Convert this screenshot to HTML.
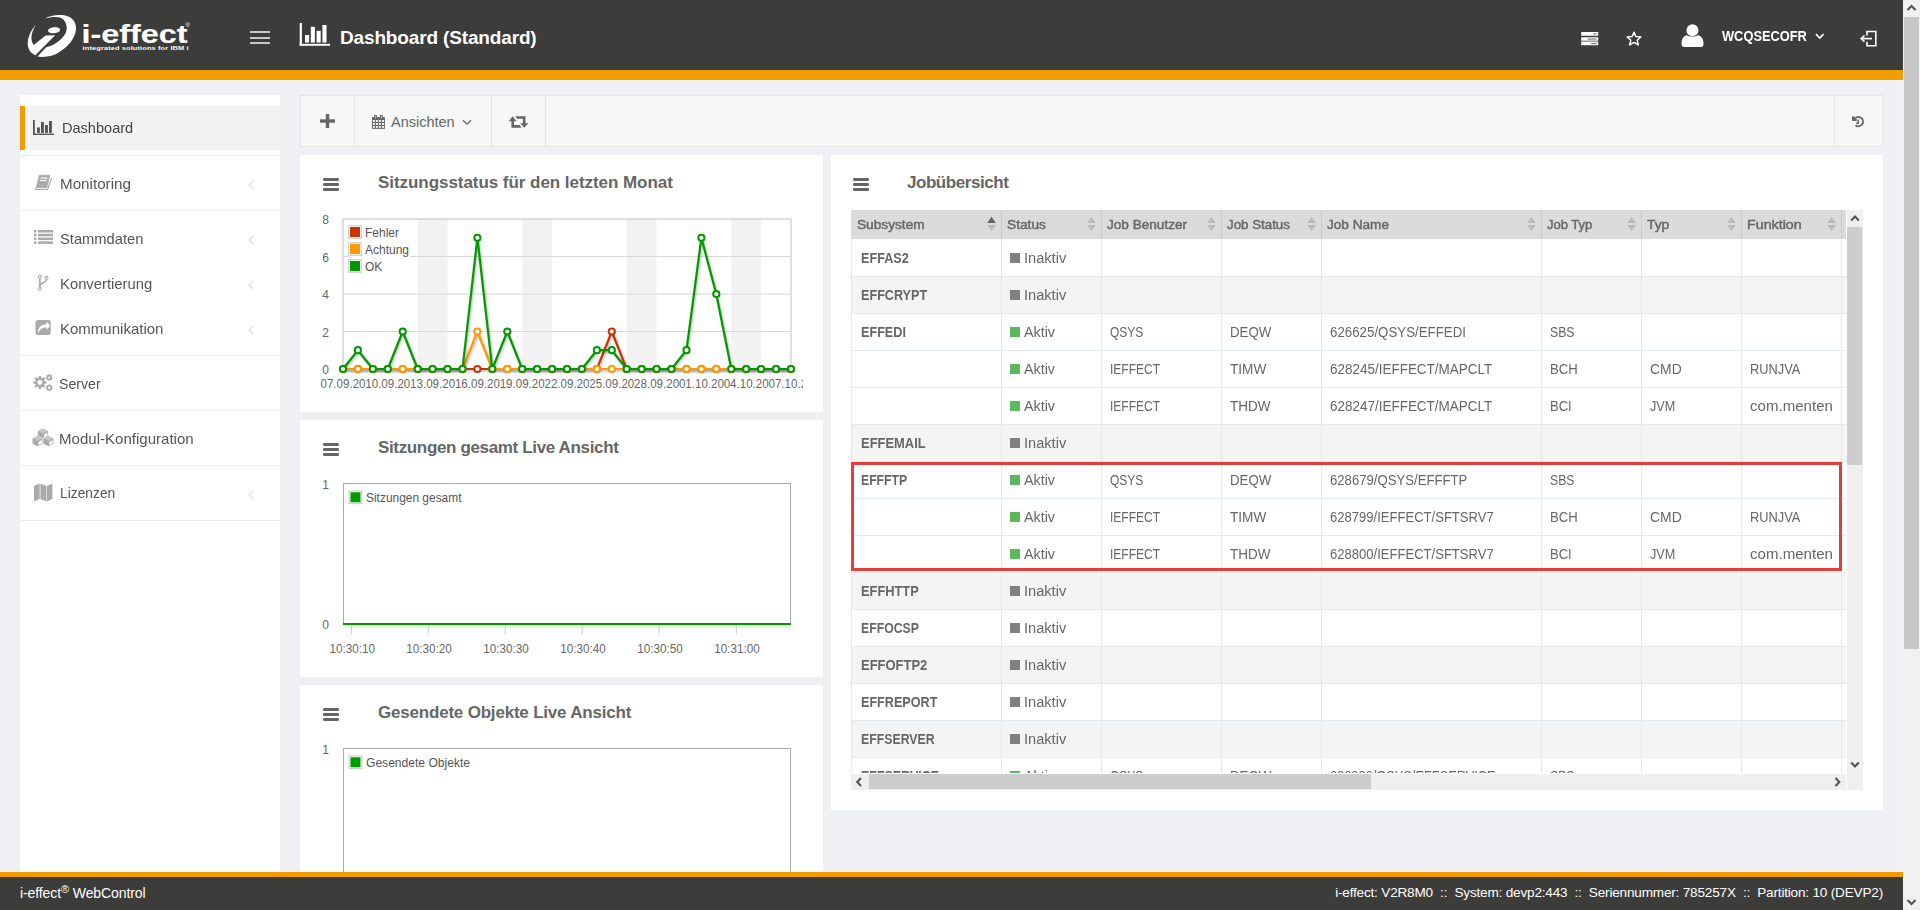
<!DOCTYPE html><html><head><meta charset="utf-8"><title>i-effect WebControl</title><style>
html,body{margin:0;padding:0;overflow:hidden;}
body{width:1920px;height:910px;overflow:hidden;position:relative;background:#eef0f4;font-family:"Liberation Sans", sans-serif;}
.a{position:absolute;}
.t{position:absolute;white-space:nowrap;line-height:1;}
svg{position:absolute;overflow:visible;}

</style></head><body>
<div class="a" style="left:0;top:0;width:1903px;height:70px;background:#3c3c3b"></div>
<div class="a" style="left:0;top:70px;width:1903px;height:10px;background:#f39c00"></div>
<svg style="left:24px;top:12px" width="56" height="48" viewBox="0 0 1062 910"><g fill="#fff">
<path d="M400,125 C480,70 650,45 780,65 C920,90 1000,200 985,340 C965,520 800,700 600,800 C480,850 350,860 255,845 L420,670 C560,640 720,540 790,400 C840,290 800,150 680,105 C600,80 480,95 400,125 Z"/>
<path d="M225,245 C130,330 50,520 75,650 C95,740 150,790 215,820 L590,440 L410,445 L185,625 C130,560 110,420 225,245 Z"/>
<ellipse cx="570" cy="345" rx="115" ry="58" transform="rotate(-5 570 345)"/>
</g></svg>
<svg style="left:0;top:0" width="200" height="70" viewBox="0 0 200 70">
<text transform="translate(81.4,42.9) scale(1.245,1)" fill="#fff" stroke="#fff" stroke-width="0.15" style="font-family:'Liberation Sans';font-weight:700;font-size:26px;letter-spacing:0px">i-effect</text>
<text transform="translate(82.6,49.9) scale(1.235,1)" fill="#fff" style="font-family:'Liberation Sans';font-weight:700;font-size:6px;letter-spacing:0.1px">integrated solutions for IBM i</text>
<text x="185.5" y="26.8" fill="#fff" style="font-family:'Liberation Sans';font-size:6px">®</text>
</svg>
<div class="a" style="left:250px;top:31px;width:20px;height:2px;background:#c8c8c8"></div>
<div class="a" style="left:250px;top:36.5px;width:20px;height:2px;background:#c8c8c8"></div>
<div class="a" style="left:250px;top:42px;width:20px;height:2px;background:#c8c8c8"></div>
<svg style="left:299px;top:23px" width="32" height="23" viewBox="0 0 32 23"><g fill="#fff">
<rect x="0.7" y="0" width="2.2" height="22.8"/><rect x="0.7" y="20.8" width="30.3" height="2"/>
<rect x="6" y="12" width="4.1" height="7.5"/><rect x="11.8" y="3.8" width="4.1" height="15.7"/><rect x="17.6" y="7.8" width="4.1" height="11.7"/><rect x="23.4" y="2" width="4.1" height="17.5"/>
</g></svg>
<div class="t" style="left:340px;top:27.5px;font-size:19px;font-weight:700;color:#fff;letter-spacing:-0.15px">Dashboard (Standard)</div>
<svg style="left:1581px;top:31px" width="18" height="15" viewBox="0 0 18 15"><g fill="#fff">
<rect x="0.2" y="1" width="17" height="3.7" rx="0.5"/><rect x="0.2" y="6.2" width="17" height="3.6" rx="0.5"/><rect x="0.2" y="9.8" width="17" height="1.1" fill="#aaa"/><rect x="0.2" y="10.9" width="17" height="3.3" rx="0.5"/>
</g><g fill="#555"><rect x="12.4" y="2.4" width="3.3" height="0.9"/><rect x="6.6" y="7.6" width="9.1" height="0.9"/><rect x="10.2" y="12.2" width="5.5" height="0.9"/></g></svg>
<svg style="left:1626px;top:31px" width="16" height="15" viewBox="0 0 16 15"><path d="M8 1.2 L10 5.6 L14.8 6 L11.2 9.2 L12.3 13.9 L8 11.4 L3.7 13.9 L4.8 9.2 L1.2 6 L6 5.6 Z" fill="none" stroke="#fff" stroke-width="1.5" stroke-linejoin="round"/></svg>
<svg style="left:1680.7px;top:24px" width="24" height="23" viewBox="0 0 24 23"><g fill="#fff">
<circle cx="11.5" cy="6.2" r="6"/><path d="M0.5 20 C0.5 14 3 12 6 11.2 C8 13 15 13 17 11.2 C20 12 22.5 14 22.5 20 C22.5 22.5 21 23 19 23 L4 23 C2 23 0.5 22.5 0.5 20 Z"/>
</g></svg>
<div class="t" style="left:1722.00px;top:28.95px;font-size:14px;font-weight:700;color:#fff;letter-spacing:0.0px;transform:scaleX(0.9173);transform-origin:0 0">WCQSECOFR</div>
<svg style="left:1814.5px;top:33px" width="11" height="7" viewBox="0 0 11 7"><path d="M1 1.2 L4.75 5 L8.5 1.2" fill="none" stroke="#fff" stroke-width="1.7"/></svg>
<svg style="left:1859px;top:30px" width="19" height="17" viewBox="0 0 19 17"><g fill="none" stroke="#fff" stroke-width="1.6">
<path d="M8 5.5 V1.5 H16.8 V15.8 H8 V11.7"/><path d="M13 8.6 H3"/><path d="M5.5 5.5 L2.2 8.6 L5.5 11.7"/>
</g></svg>
<div class="a" style="left:1903px;top:0;width:17px;height:910px;background:#f1f1f1"></div>
<div class="a" style="left:1904px;top:17px;width:15px;height:632px;background:#c6c6c6"></div>
<svg style="left:1903px;top:0" width="17" height="17" viewBox="0 0 17 17"><path d="M4.5 10 L8.5 6 L12.5 10" fill="none" stroke="#505050" stroke-width="2"/></svg>
<svg style="left:1903px;top:893px" width="17" height="17" viewBox="0 0 17 17"><path d="M4.5 7 L8.5 11 L12.5 7" fill="none" stroke="#505050" stroke-width="2"/></svg>
<div class="a" style="left:20px;top:95px;width:260px;height:777px;background:#fff"></div>
<div class="a" style="left:20px;top:106px;width:260px;height:44px;background:#f2f2f2"></div>
<div class="a" style="left:20px;top:106px;width:5px;height:44px;background:#f39c00"></div>
<div class="a" style="left:20px;top:155px;width:260px;height:1px;background:#ececec"></div>
<div class="a" style="left:20px;top:210px;width:260px;height:1px;background:#ececec"></div>
<div class="a" style="left:20px;top:355px;width:260px;height:1px;background:#ececec"></div>
<div class="a" style="left:20px;top:410px;width:260px;height:1px;background:#ececec"></div>
<div class="a" style="left:20px;top:465px;width:260px;height:1px;background:#ececec"></div>
<div class="a" style="left:20px;top:520px;width:260px;height:1px;background:#ececec"></div>
<div class="t" style="left:61.90px;top:121.39px;font-size:14.6px;font-weight:400;color:#444;letter-spacing:0.0px;transform:scaleX(0.9969);transform-origin:0 0">Dashboard</div>
<div class="t" style="left:60.00px;top:176.64px;font-size:14.6px;font-weight:400;color:#555;letter-spacing:0.0px;transform:scaleX(1.0416);transform-origin:0 0">Monitoring</div>
<svg style="left:247px;top:180px" width="8" height="10" viewBox="0 0 8 10"><path d="M6.5 0.8 L2 5 L6.5 9.2" fill="none" stroke="#dedede" stroke-width="1.2"/></svg>
<div class="t" style="left:59.60px;top:231.74px;font-size:14.6px;font-weight:400;color:#555;letter-spacing:0.0px;transform:scaleX(1.0076);transform-origin:0 0">Stammdaten</div>
<svg style="left:247px;top:235px" width="8" height="10" viewBox="0 0 8 10"><path d="M6.5 0.8 L2 5 L6.5 9.2" fill="none" stroke="#dedede" stroke-width="1.2"/></svg>
<div class="t" style="left:59.60px;top:276.84px;font-size:14.6px;font-weight:400;color:#555;letter-spacing:0.0px;transform:scaleX(1.0154);transform-origin:0 0">Konvertierung</div>
<svg style="left:247px;top:280px" width="8" height="10" viewBox="0 0 8 10"><path d="M6.5 0.8 L2 5 L6.5 9.2" fill="none" stroke="#dedede" stroke-width="1.2"/></svg>
<div class="t" style="left:59.60px;top:321.64px;font-size:14.6px;font-weight:400;color:#555;letter-spacing:0.0px;transform:scaleX(1.0286);transform-origin:0 0">Kommunikation</div>
<svg style="left:247px;top:325px" width="8" height="10" viewBox="0 0 8 10"><path d="M6.5 0.8 L2 5 L6.5 9.2" fill="none" stroke="#dedede" stroke-width="1.2"/></svg>
<div class="t" style="left:59.40px;top:376.94px;font-size:14.6px;font-weight:400;color:#555;letter-spacing:0.0px;transform:scaleX(0.9698);transform-origin:0 0">Server</div>
<div class="t" style="left:59.40px;top:432.04px;font-size:14.6px;font-weight:400;color:#555;letter-spacing:0.0px;transform:scaleX(1.0308);transform-origin:0 0">Modul-Konfiguration</div>
<div class="t" style="left:60.00px;top:486.34px;font-size:14.6px;font-weight:400;color:#555;letter-spacing:0.0px;transform:scaleX(0.9462);transform-origin:0 0">Lizenzen</div>
<svg style="left:247px;top:490px" width="8" height="10" viewBox="0 0 8 10"><path d="M6.5 0.8 L2 5 L6.5 9.2" fill="none" stroke="#dedede" stroke-width="1.2"/></svg>
<svg style="left:33px;top:120px" width="22" height="16" viewBox="0 0 22 16"><g fill="#555">
<rect x="0" y="0" width="1.8" height="15"/><rect x="0" y="13.6" width="21" height="1.4"/>
<rect x="4" y="7.4" width="2.9" height="5.5"/><rect x="8" y="2.1" width="2.9" height="10.8"/><rect x="12" y="5" width="2.9" height="7.9"/><rect x="16" y="1" width="2.9" height="11.9"/>
</g></svg>
<svg style="left:34px;top:174px" width="20" height="17" viewBox="0 0 20 17">
<path d="M5.4 1.2 H15.8 L12.8 13.7 H2.1 Z" fill="#aaa" stroke="#aaa" stroke-width="0.8" stroke-linejoin="round"/>
<path d="M6.8 4.1 H13.2 M6.1 6.5 H12.6" stroke="#fff" stroke-width="1.1"/>
<path d="M1.6 14.2 C1 14.6 1 15.4 1.8 15.5 H13.6 L17.6 4" fill="none" stroke="#aaa" stroke-width="1.1"/>
</svg>
<svg style="left:34px;top:230px" width="19" height="14" viewBox="0 0 19 14"><g fill="#aaa">
<rect x="0" y="0" width="2.5" height="2.5"/><rect x="4" y="0" width="15" height="2.5"/>
<rect x="0" y="3.8" width="2.5" height="2.5"/><rect x="4" y="3.8" width="15" height="2.5"/>
<rect x="0" y="7.6" width="2.5" height="2.5"/><rect x="4" y="7.6" width="15" height="2.5"/>
<rect x="0" y="11.4" width="2.5" height="2.5"/><rect x="4" y="11.4" width="15" height="2.5"/>
</g></svg>
<svg style="left:37px;top:274px" width="12" height="17" viewBox="0 0 12 17"><g fill="none" stroke="#aaa">
<circle cx="2.85" cy="2.8" r="1.45" stroke-width="1.1"/><circle cx="9.5" cy="3.8" r="1.45" stroke-width="1.1"/><circle cx="2.85" cy="14.5" r="1.45" stroke-width="1.1"/>
<path d="M2.85 4.3 V13" stroke-width="1.6"/><path d="M9.5 5.3 C9.5 9.5 3.5 8.5 2.85 11.5" stroke-width="1.5"/></g></svg>
<svg style="left:35px;top:319px" width="17" height="17" viewBox="0 0 17 17"><rect x="0.5" y="1" width="15.3" height="15" rx="2.5" fill="#aaa"/>
<path d="M3 14.2 C2.8 9 5.5 5.2 11.5 5.2 V2.5 L15.2 6.7 L11.5 10.9 V8.4 C7.5 8.4 5 10 3 14.2 Z" fill="#fff"/></svg>
<svg style="left:33px;top:374px" width="21" height="18" viewBox="0 0 21 18"><g fill="#aaa">
<circle cx="6.9" cy="8.5" r="4.8"/><g stroke="#aaa" stroke-width="2.4"><path d="M6.9 2 V15 M0.4 8.5 H13.4 M2.3 3.9 L11.5 13.1 M2.3 13.1 L11.5 3.9"/></g>
<circle cx="16.2" cy="3.6" r="2.7"/><g stroke="#aaa" stroke-width="1.3"><path d="M16.2 0.1 V7.1 M12.7 3.6 H19.7 M13.7 1.1 L18.7 6.1 M13.7 6.1 L18.7 1.1"/></g>
<circle cx="16.2" cy="13.8" r="2.7"/><g stroke="#aaa" stroke-width="1.3"><path d="M16.2 10.3 V17.3 M12.7 13.8 H19.7 M13.7 11.3 L18.7 16.3 M13.7 16.3 L18.7 11.3"/></g>
</g><g fill="#fff"><circle cx="6.9" cy="8.5" r="2.4"/><circle cx="16.2" cy="3.6" r="1.2"/><circle cx="16.2" cy="13.8" r="1.2"/></g></svg>
<svg style="left:32px;top:428px" width="22" height="19" viewBox="0 0 22 19"><path d="M11 0.1999999999999993 L16.4 2.8999999999999995 V8.3 L11 11.0 L5.6 8.3 V2.8999999999999995 Z" fill="#aaa" stroke="#fff" stroke-width="0.6"/><path d="M12 6.5 L15.299999999999999 4.5 V7.700000000000001 L12 9.7 Z" fill="#fff"/><path d="M6.699999999999999 2.8999999999999995 L11 1.0999999999999992 L15.299999999999999 2.8999999999999995 L11 5.5 Z" fill="#fff" opacity="0.35"/><path d="M5.6 7.799999999999999 L11.0 10.5 V15.899999999999999 L5.6 18.6 L0.1999999999999993 15.899999999999999 V10.5 Z" fill="#aaa" stroke="#fff" stroke-width="0.6"/><path d="M6.6 14.1 L9.9 12.1 V15.299999999999999 L6.6 17.3 Z" fill="#fff"/><path d="M1.2999999999999994 10.5 L5.6 8.7 L9.9 10.5 L5.6 13.1 Z" fill="#fff" opacity="0.35"/><path d="M16.4 7.799999999999999 L21.799999999999997 10.5 V15.899999999999999 L16.4 18.6 L10.999999999999998 15.899999999999999 V10.5 Z" fill="#aaa" stroke="#fff" stroke-width="0.6"/><path d="M17.4 14.1 L20.699999999999996 12.1 V15.299999999999999 L17.4 17.3 Z" fill="#fff"/><path d="M12.099999999999998 10.5 L16.4 8.7 L20.699999999999996 10.5 L16.4 13.1 Z" fill="#fff" opacity="0.35"/></svg>
<svg style="left:34px;top:483px" width="19" height="19" viewBox="0 0 19 19"><g fill="#aaa">
<path d="M0 3 L5.7 0.5 V16 L0 18.5 Z"/><path d="M6.4 0.5 L12.5 3 V18.5 L6.4 16 Z"/><path d="M13 3 L18.4 0.5 V16 L13 18.5 Z"/>
</g></svg>
<div class="a" style="left:300px;top:95px;width:1581px;height:50px;background:#f7f7f7;border:1px solid #e3e3e3"></div>
<div class="a" style="left:354px;top:96px;width:1px;height:50px;background:#e3e3e3"></div>
<div class="a" style="left:491px;top:96px;width:1px;height:50px;background:#e3e3e3"></div>
<div class="a" style="left:545px;top:96px;width:1px;height:50px;background:#e3e3e3"></div>
<div class="a" style="left:1834px;top:96px;width:1px;height:50px;background:#e3e3e3"></div>
<svg style="left:320px;top:114px" width="15" height="14" viewBox="0 0 15 14"><g fill="#666"><rect x="5.8" y="0" width="3.4" height="14"/><rect x="0" y="5.3" width="15" height="3.4"/></g></svg>
<svg style="left:371px;top:115px" width="15" height="15" viewBox="0 0 15 15"><g fill="#666">
<rect x="1" y="2.1" width="12.9" height="11.75"/><rect x="3" y="0" width="2.9" height="4.2" rx="0.6"/><rect x="8.9" y="0" width="2.9" height="4.2" rx="0.6"/></g>
<g fill="#f7f7f7"><rect x="1.9" y="5" width="2.00" height="1.90"/><rect x="1.9" y="8.05" width="2.00" height="1.85"/><rect x="1.9" y="11" width="2.00" height="1.80"/><rect x="4.9" y="5" width="2.00" height="1.90"/><rect x="4.9" y="8.05" width="2.00" height="1.85"/><rect x="4.9" y="11" width="2.00" height="1.80"/><rect x="7.8" y="5" width="2.15" height="1.90"/><rect x="7.8" y="8.05" width="2.15" height="1.85"/><rect x="7.8" y="11" width="2.15" height="1.80"/><rect x="10.9" y="5" width="2.10" height="1.90"/><rect x="10.9" y="8.05" width="2.10" height="1.85"/><rect x="10.9" y="11" width="2.10" height="1.80"/><rect x="4.1" y="0.9" width="0.7" height="2.6" fill="#ddd"/><rect x="10" y="0.9" width="0.7" height="2.6" fill="#ddd"/></g></svg>
<div class="t" style="left:391px;top:115px;font-size:14.5px;color:#666">Ansichten</div>
<svg style="left:462px;top:119px" width="10" height="7" viewBox="0 0 10 7"><path d="M1 1.2 L5 5.2 L9 1.2" fill="none" stroke="#666" stroke-width="1.3"/></svg>
<svg style="left:508px;top:115px" width="21" height="14" viewBox="0 0 21 14"><g fill="#666">
<path d="M4.6 1.2 L8.6 6.2 H6 V10.1 H11.7 L13.5 12.7 H3.4 V6.2 H0.8 Z"/>
<path d="M7.4 1.2 H17.5 V8.2 H20.3 L16.3 12.8 L12.2 8.2 H14.9 V3.8 H9.1 Z"/>
</g></svg>
<svg style="left:1851px;top:115px" width="15" height="14" viewBox="0 0 15 14"><g fill="none" stroke="#666" stroke-width="1.9"><path d="M4.2 3.3 A4.6 4.6 0 1 1 4.45 10.15"/><path d="M7.2 4.4 V8.2 H5.2" stroke-width="1.5"/></g><path d="M1 1.3 H2.6 L5.8 4.4 V5.9 H1 Z" fill="#666"/></svg>
<div class="a" style="left:300px;top:155px;width:523px;height:257px;background:#fff"></div>
<div class="a" style="left:300px;top:420px;width:523px;height:257px;background:#fff"></div>
<div class="a" style="left:300px;top:685px;width:523px;height:187px;background:#fff"></div>
<div class="a" style="left:831px;top:155px;width:1052px;height:655px;background:#fff"></div>
<div class="a" style="left:323px;top:178px;width:16px;height:2.5px;border-radius:1.2px;background:#666"></div><div class="a" style="left:323px;top:183.2px;width:16px;height:2.5px;border-radius:1.2px;background:#666"></div><div class="a" style="left:323px;top:188.3px;width:16px;height:2.5px;border-radius:1.2px;background:#666"></div>
<div class="t" style="left:378px;top:174px;font-size:17px;font-weight:700;color:#666;letter-spacing:-0.05px">Sitzungsstatus für den letzten Monat</div>
<div class="a" style="left:323px;top:443px;width:16px;height:2.5px;border-radius:1.2px;background:#666"></div><div class="a" style="left:323px;top:448.2px;width:16px;height:2.5px;border-radius:1.2px;background:#666"></div><div class="a" style="left:323px;top:453.3px;width:16px;height:2.5px;border-radius:1.2px;background:#666"></div>
<div class="t" style="left:378px;top:439px;font-size:17px;font-weight:700;color:#666;letter-spacing:-0.35px">Sitzungen gesamt Live Ansicht</div>
<div class="a" style="left:323px;top:708px;width:16px;height:2.5px;border-radius:1.2px;background:#666"></div><div class="a" style="left:323px;top:713.2px;width:16px;height:2.5px;border-radius:1.2px;background:#666"></div><div class="a" style="left:323px;top:718.3px;width:16px;height:2.5px;border-radius:1.2px;background:#666"></div>
<div class="t" style="left:378px;top:704px;font-size:17px;font-weight:700;color:#666;letter-spacing:-0.2px">Gesendete Objekte Live Ansicht</div>
<div class="a" style="left:853px;top:178px;width:16px;height:2.5px;border-radius:1.2px;background:#666"></div><div class="a" style="left:853px;top:183.2px;width:16px;height:2.5px;border-radius:1.2px;background:#666"></div><div class="a" style="left:853px;top:188.3px;width:16px;height:2.5px;border-radius:1.2px;background:#666"></div>
<div class="t" style="left:907px;top:174px;font-size:17px;font-weight:700;color:#666;letter-spacing:-0.45px">Jobübersicht</div>
<svg style="left:0;top:0" width="830" height="410" viewBox="0 0 830 410"><defs><filter id="sh" x="-5%" y="-5%" width="110%" height="120%"><feGaussianBlur stdDeviation="1"/></filter><clipPath id="c1"><rect x="310" y="200" width="493" height="200"/></clipPath></defs><rect x="417.7" y="219" width="29.9" height="150" fill="#f2f2f2"/><rect x="522.2" y="219" width="29.9" height="150" fill="#f2f2f2"/><rect x="626.7" y="219" width="29.9" height="150" fill="#f2f2f2"/><rect x="731.3" y="219" width="29.9" height="150" fill="#f2f2f2"/><rect x="343" y="331.0" width="448" height="1" fill="#d8d8d8"/><rect x="343" y="293.5" width="448" height="1" fill="#d8d8d8"/><rect x="343" y="256.0" width="448" height="1" fill="#d8d8d8"/><rect x="343" y="218.5" width="448" height="1" fill="#c0c0c0"/><rect x="342.5" y="219" width="1" height="150" fill="#c0c0c0"/><rect x="790.5" y="219" width="1" height="150" fill="#c0c0c0"/><text x="329" y="374.0" text-anchor="end" font-family="Liberation Sans" font-size="12" fill="#666">0</text><text x="329" y="336.5" text-anchor="end" font-family="Liberation Sans" font-size="12" fill="#666">2</text><text x="329" y="299.0" text-anchor="end" font-family="Liberation Sans" font-size="12" fill="#666">4</text><text x="329" y="261.5" text-anchor="end" font-family="Liberation Sans" font-size="12" fill="#666">6</text><text x="329" y="224.0" text-anchor="end" font-family="Liberation Sans" font-size="12" fill="#666">8</text><rect x="348" y="220" width="62" height="55" fill="#fff"/><rect x="348.7" y="225.7" width="12.6" height="12.6" fill="#fff" stroke="#cfcfcf" stroke-width="1.2"/><rect x="350" y="227.0" width="10" height="10" fill="#cc3300"/><text x="365" y="236.5" font-family="Liberation Sans" font-size="12" fill="#555">Fehler</text><rect x="348.7" y="242.7" width="12.6" height="12.6" fill="#fff" stroke="#cfcfcf" stroke-width="1.2"/><rect x="350" y="244.0" width="10" height="10" fill="#ff9900"/><text x="365" y="253.5" font-family="Liberation Sans" font-size="12" fill="#555">Achtung</text><rect x="348.7" y="259.7" width="12.6" height="12.6" fill="#fff" stroke="#cfcfcf" stroke-width="1.2"/><rect x="350" y="261.0" width="10" height="10" fill="#009900"/><text x="365" y="270.5" font-family="Liberation Sans" font-size="12" fill="#555">OK</text><polyline points="343.0,369.0 357.9,369.0 372.9,369.0 387.8,369.0 402.7,369.0 417.7,369.0 432.6,369.0 447.5,369.0 462.5,369.0 477.4,369.0 492.3,369.0 507.3,369.0 522.2,369.0 537.1,369.0 552.1,369.0 567.0,369.0 581.9,369.0 596.9,369.0 611.8,331.5 626.7,369.0 641.7,369.0 656.6,369.0 671.5,369.0 686.5,369.0 701.4,369.0 716.3,369.0 731.3,369.0 746.2,369.0 761.1,369.0 776.1,369.0 791.0,369.0" fill="none" stroke="#000" stroke-opacity="0.25" stroke-width="2.5" transform="translate(1,1.5)" filter="url(#sh)"/><polyline points="343.0,369.0 357.9,369.0 372.9,369.0 387.8,369.0 402.7,369.0 417.7,369.0 432.6,369.0 447.5,369.0 462.5,369.0 477.4,369.0 492.3,369.0 507.3,369.0 522.2,369.0 537.1,369.0 552.1,369.0 567.0,369.0 581.9,369.0 596.9,369.0 611.8,331.5 626.7,369.0 641.7,369.0 656.6,369.0 671.5,369.0 686.5,369.0 701.4,369.0 716.3,369.0 731.3,369.0 746.2,369.0 761.1,369.0 776.1,369.0 791.0,369.0" fill="none" stroke="#cc3300" stroke-width="2.2" stroke-linejoin="round"/><circle cx="343.0" cy="369.0" r="3.1" fill="#fff" stroke="#cc3300" stroke-width="2"/><circle cx="357.9" cy="369.0" r="3.1" fill="#fff" stroke="#cc3300" stroke-width="2"/><circle cx="372.9" cy="369.0" r="3.1" fill="#fff" stroke="#cc3300" stroke-width="2"/><circle cx="387.8" cy="369.0" r="3.1" fill="#fff" stroke="#cc3300" stroke-width="2"/><circle cx="402.7" cy="369.0" r="3.1" fill="#fff" stroke="#cc3300" stroke-width="2"/><circle cx="417.7" cy="369.0" r="3.1" fill="#fff" stroke="#cc3300" stroke-width="2"/><circle cx="432.6" cy="369.0" r="3.1" fill="#fff" stroke="#cc3300" stroke-width="2"/><circle cx="447.5" cy="369.0" r="3.1" fill="#fff" stroke="#cc3300" stroke-width="2"/><circle cx="462.5" cy="369.0" r="3.1" fill="#fff" stroke="#cc3300" stroke-width="2"/><circle cx="477.4" cy="369.0" r="3.1" fill="#fff" stroke="#cc3300" stroke-width="2"/><circle cx="492.3" cy="369.0" r="3.1" fill="#fff" stroke="#cc3300" stroke-width="2"/><circle cx="507.3" cy="369.0" r="3.1" fill="#fff" stroke="#cc3300" stroke-width="2"/><circle cx="522.2" cy="369.0" r="3.1" fill="#fff" stroke="#cc3300" stroke-width="2"/><circle cx="537.1" cy="369.0" r="3.1" fill="#fff" stroke="#cc3300" stroke-width="2"/><circle cx="552.1" cy="369.0" r="3.1" fill="#fff" stroke="#cc3300" stroke-width="2"/><circle cx="567.0" cy="369.0" r="3.1" fill="#fff" stroke="#cc3300" stroke-width="2"/><circle cx="581.9" cy="369.0" r="3.1" fill="#fff" stroke="#cc3300" stroke-width="2"/><circle cx="596.9" cy="369.0" r="3.1" fill="#fff" stroke="#cc3300" stroke-width="2"/><circle cx="611.8" cy="331.5" r="3.1" fill="#fff" stroke="#cc3300" stroke-width="2"/><circle cx="626.7" cy="369.0" r="3.1" fill="#fff" stroke="#cc3300" stroke-width="2"/><circle cx="641.7" cy="369.0" r="3.1" fill="#fff" stroke="#cc3300" stroke-width="2"/><circle cx="656.6" cy="369.0" r="3.1" fill="#fff" stroke="#cc3300" stroke-width="2"/><circle cx="671.5" cy="369.0" r="3.1" fill="#fff" stroke="#cc3300" stroke-width="2"/><circle cx="686.5" cy="369.0" r="3.1" fill="#fff" stroke="#cc3300" stroke-width="2"/><circle cx="701.4" cy="369.0" r="3.1" fill="#fff" stroke="#cc3300" stroke-width="2"/><circle cx="716.3" cy="369.0" r="3.1" fill="#fff" stroke="#cc3300" stroke-width="2"/><circle cx="731.3" cy="369.0" r="3.1" fill="#fff" stroke="#cc3300" stroke-width="2"/><circle cx="746.2" cy="369.0" r="3.1" fill="#fff" stroke="#cc3300" stroke-width="2"/><circle cx="761.1" cy="369.0" r="3.1" fill="#fff" stroke="#cc3300" stroke-width="2"/><circle cx="776.1" cy="369.0" r="3.1" fill="#fff" stroke="#cc3300" stroke-width="2"/><circle cx="791.0" cy="369.0" r="3.1" fill="#fff" stroke="#cc3300" stroke-width="2"/><polyline points="343.0,369.0 357.9,369.0 372.9,369.0 387.8,369.0 402.7,369.0 417.7,369.0 432.6,369.0 447.5,369.0 462.5,369.0 477.4,331.5 492.3,369.0 507.3,369.0 522.2,369.0 537.1,369.0 552.1,369.0 567.0,369.0 581.9,369.0 596.9,369.0 611.8,369.0 626.7,369.0 641.7,369.0 656.6,369.0 671.5,369.0 686.5,369.0 701.4,369.0 716.3,369.0 731.3,369.0 746.2,369.0 761.1,369.0 776.1,369.0 791.0,369.0" fill="none" stroke="#000" stroke-opacity="0.25" stroke-width="2.5" transform="translate(1,1.5)" filter="url(#sh)"/><polyline points="343.0,369.0 357.9,369.0 372.9,369.0 387.8,369.0 402.7,369.0 417.7,369.0 432.6,369.0 447.5,369.0 462.5,369.0 477.4,331.5 492.3,369.0 507.3,369.0 522.2,369.0 537.1,369.0 552.1,369.0 567.0,369.0 581.9,369.0 596.9,369.0 611.8,369.0 626.7,369.0 641.7,369.0 656.6,369.0 671.5,369.0 686.5,369.0 701.4,369.0 716.3,369.0 731.3,369.0 746.2,369.0 761.1,369.0 776.1,369.0 791.0,369.0" fill="none" stroke="#ff9900" stroke-width="2.2" stroke-linejoin="round"/><circle cx="343.0" cy="369.0" r="3.1" fill="#fff" stroke="#ff9900" stroke-width="2"/><circle cx="357.9" cy="369.0" r="3.1" fill="#fff" stroke="#ff9900" stroke-width="2"/><circle cx="372.9" cy="369.0" r="3.1" fill="#fff" stroke="#ff9900" stroke-width="2"/><circle cx="387.8" cy="369.0" r="3.1" fill="#fff" stroke="#ff9900" stroke-width="2"/><circle cx="402.7" cy="369.0" r="3.1" fill="#fff" stroke="#ff9900" stroke-width="2"/><circle cx="417.7" cy="369.0" r="3.1" fill="#fff" stroke="#ff9900" stroke-width="2"/><circle cx="432.6" cy="369.0" r="3.1" fill="#fff" stroke="#ff9900" stroke-width="2"/><circle cx="447.5" cy="369.0" r="3.1" fill="#fff" stroke="#ff9900" stroke-width="2"/><circle cx="462.5" cy="369.0" r="3.1" fill="#fff" stroke="#ff9900" stroke-width="2"/><circle cx="477.4" cy="331.5" r="3.1" fill="#fff" stroke="#ff9900" stroke-width="2"/><circle cx="492.3" cy="369.0" r="3.1" fill="#fff" stroke="#ff9900" stroke-width="2"/><circle cx="507.3" cy="369.0" r="3.1" fill="#fff" stroke="#ff9900" stroke-width="2"/><circle cx="522.2" cy="369.0" r="3.1" fill="#fff" stroke="#ff9900" stroke-width="2"/><circle cx="537.1" cy="369.0" r="3.1" fill="#fff" stroke="#ff9900" stroke-width="2"/><circle cx="552.1" cy="369.0" r="3.1" fill="#fff" stroke="#ff9900" stroke-width="2"/><circle cx="567.0" cy="369.0" r="3.1" fill="#fff" stroke="#ff9900" stroke-width="2"/><circle cx="581.9" cy="369.0" r="3.1" fill="#fff" stroke="#ff9900" stroke-width="2"/><circle cx="596.9" cy="369.0" r="3.1" fill="#fff" stroke="#ff9900" stroke-width="2"/><circle cx="611.8" cy="369.0" r="3.1" fill="#fff" stroke="#ff9900" stroke-width="2"/><circle cx="626.7" cy="369.0" r="3.1" fill="#fff" stroke="#ff9900" stroke-width="2"/><circle cx="641.7" cy="369.0" r="3.1" fill="#fff" stroke="#ff9900" stroke-width="2"/><circle cx="656.6" cy="369.0" r="3.1" fill="#fff" stroke="#ff9900" stroke-width="2"/><circle cx="671.5" cy="369.0" r="3.1" fill="#fff" stroke="#ff9900" stroke-width="2"/><circle cx="686.5" cy="369.0" r="3.1" fill="#fff" stroke="#ff9900" stroke-width="2"/><circle cx="701.4" cy="369.0" r="3.1" fill="#fff" stroke="#ff9900" stroke-width="2"/><circle cx="716.3" cy="369.0" r="3.1" fill="#fff" stroke="#ff9900" stroke-width="2"/><circle cx="731.3" cy="369.0" r="3.1" fill="#fff" stroke="#ff9900" stroke-width="2"/><circle cx="746.2" cy="369.0" r="3.1" fill="#fff" stroke="#ff9900" stroke-width="2"/><circle cx="761.1" cy="369.0" r="3.1" fill="#fff" stroke="#ff9900" stroke-width="2"/><circle cx="776.1" cy="369.0" r="3.1" fill="#fff" stroke="#ff9900" stroke-width="2"/><circle cx="791.0" cy="369.0" r="3.1" fill="#fff" stroke="#ff9900" stroke-width="2"/><polyline points="343.0,369.0 357.9,350.2 372.9,369.0 387.8,369.0 402.7,331.5 417.7,369.0 432.6,369.0 447.5,369.0 462.5,369.0 477.4,237.8 492.3,369.0 507.3,331.5 522.2,369.0 537.1,369.0 552.1,369.0 567.0,369.0 581.9,369.0 596.9,350.2 611.8,350.2 626.7,369.0 641.7,369.0 656.6,369.0 671.5,369.0 686.5,350.2 701.4,237.8 716.3,294.0 731.3,369.0 746.2,369.0 761.1,369.0 776.1,369.0 791.0,369.0" fill="none" stroke="#000" stroke-opacity="0.25" stroke-width="2.5" transform="translate(1,1.5)" filter="url(#sh)"/><polyline points="343.0,369.0 357.9,350.2 372.9,369.0 387.8,369.0 402.7,331.5 417.7,369.0 432.6,369.0 447.5,369.0 462.5,369.0 477.4,237.8 492.3,369.0 507.3,331.5 522.2,369.0 537.1,369.0 552.1,369.0 567.0,369.0 581.9,369.0 596.9,350.2 611.8,350.2 626.7,369.0 641.7,369.0 656.6,369.0 671.5,369.0 686.5,350.2 701.4,237.8 716.3,294.0 731.3,369.0 746.2,369.0 761.1,369.0 776.1,369.0 791.0,369.0" fill="none" stroke="#009900" stroke-width="2.2" stroke-linejoin="round"/><circle cx="343.0" cy="369.0" r="3.1" fill="#fff" stroke="#009900" stroke-width="2"/><circle cx="357.9" cy="350.2" r="3.1" fill="#fff" stroke="#009900" stroke-width="2"/><circle cx="372.9" cy="369.0" r="3.1" fill="#fff" stroke="#009900" stroke-width="2"/><circle cx="387.8" cy="369.0" r="3.1" fill="#fff" stroke="#009900" stroke-width="2"/><circle cx="402.7" cy="331.5" r="3.1" fill="#fff" stroke="#009900" stroke-width="2"/><circle cx="417.7" cy="369.0" r="3.1" fill="#fff" stroke="#009900" stroke-width="2"/><circle cx="432.6" cy="369.0" r="3.1" fill="#fff" stroke="#009900" stroke-width="2"/><circle cx="447.5" cy="369.0" r="3.1" fill="#fff" stroke="#009900" stroke-width="2"/><circle cx="462.5" cy="369.0" r="3.1" fill="#fff" stroke="#009900" stroke-width="2"/><circle cx="477.4" cy="237.8" r="3.1" fill="#fff" stroke="#009900" stroke-width="2"/><circle cx="492.3" cy="369.0" r="3.1" fill="#fff" stroke="#009900" stroke-width="2"/><circle cx="507.3" cy="331.5" r="3.1" fill="#fff" stroke="#009900" stroke-width="2"/><circle cx="522.2" cy="369.0" r="3.1" fill="#fff" stroke="#009900" stroke-width="2"/><circle cx="537.1" cy="369.0" r="3.1" fill="#fff" stroke="#009900" stroke-width="2"/><circle cx="552.1" cy="369.0" r="3.1" fill="#fff" stroke="#009900" stroke-width="2"/><circle cx="567.0" cy="369.0" r="3.1" fill="#fff" stroke="#009900" stroke-width="2"/><circle cx="581.9" cy="369.0" r="3.1" fill="#fff" stroke="#009900" stroke-width="2"/><circle cx="596.9" cy="350.2" r="3.1" fill="#fff" stroke="#009900" stroke-width="2"/><circle cx="611.8" cy="350.2" r="3.1" fill="#fff" stroke="#009900" stroke-width="2"/><circle cx="626.7" cy="369.0" r="3.1" fill="#fff" stroke="#009900" stroke-width="2"/><circle cx="641.7" cy="369.0" r="3.1" fill="#fff" stroke="#009900" stroke-width="2"/><circle cx="656.6" cy="369.0" r="3.1" fill="#fff" stroke="#009900" stroke-width="2"/><circle cx="671.5" cy="369.0" r="3.1" fill="#fff" stroke="#009900" stroke-width="2"/><circle cx="686.5" cy="350.2" r="3.1" fill="#fff" stroke="#009900" stroke-width="2"/><circle cx="701.4" cy="237.8" r="3.1" fill="#fff" stroke="#009900" stroke-width="2"/><circle cx="716.3" cy="294.0" r="3.1" fill="#fff" stroke="#009900" stroke-width="2"/><circle cx="731.3" cy="369.0" r="3.1" fill="#fff" stroke="#009900" stroke-width="2"/><circle cx="746.2" cy="369.0" r="3.1" fill="#fff" stroke="#009900" stroke-width="2"/><circle cx="761.1" cy="369.0" r="3.1" fill="#fff" stroke="#009900" stroke-width="2"/><circle cx="776.1" cy="369.0" r="3.1" fill="#fff" stroke="#009900" stroke-width="2"/><circle cx="791.0" cy="369.0" r="3.1" fill="#fff" stroke="#009900" stroke-width="2"/><g clip-path="url(#c1)"><text x="343.0" y="387.8" text-anchor="middle" font-family="Liberation Sans" font-size="12" fill="#666" textLength="45" lengthAdjust="spacingAndGlyphs">07.09.20</text><text x="387.8" y="387.8" text-anchor="middle" font-family="Liberation Sans" font-size="12" fill="#666" textLength="45" lengthAdjust="spacingAndGlyphs">10.09.20</text><text x="432.6" y="387.8" text-anchor="middle" font-family="Liberation Sans" font-size="12" fill="#666" textLength="45" lengthAdjust="spacingAndGlyphs">13.09.20</text><text x="477.4" y="387.8" text-anchor="middle" font-family="Liberation Sans" font-size="12" fill="#666" textLength="45" lengthAdjust="spacingAndGlyphs">16.09.20</text><text x="522.2" y="387.8" text-anchor="middle" font-family="Liberation Sans" font-size="12" fill="#666" textLength="45" lengthAdjust="spacingAndGlyphs">19.09.20</text><text x="567.0" y="387.8" text-anchor="middle" font-family="Liberation Sans" font-size="12" fill="#666" textLength="45" lengthAdjust="spacingAndGlyphs">22.09.20</text><text x="611.8" y="387.8" text-anchor="middle" font-family="Liberation Sans" font-size="12" fill="#666" textLength="45" lengthAdjust="spacingAndGlyphs">25.09.20</text><text x="656.6" y="387.8" text-anchor="middle" font-family="Liberation Sans" font-size="12" fill="#666" textLength="45" lengthAdjust="spacingAndGlyphs">28.09.20</text><text x="701.4" y="387.8" text-anchor="middle" font-family="Liberation Sans" font-size="12" fill="#666" textLength="45" lengthAdjust="spacingAndGlyphs">01.10.20</text><text x="746.2" y="387.8" text-anchor="middle" font-family="Liberation Sans" font-size="12" fill="#666" textLength="45" lengthAdjust="spacingAndGlyphs">04.10.20</text><text x="791.0" y="387.8" text-anchor="middle" font-family="Liberation Sans" font-size="12" fill="#666" textLength="45" lengthAdjust="spacingAndGlyphs">07.10.20</text></g></svg>
<svg style="left:0;top:0" width="830" height="690" viewBox="0 0 830 690"><defs><filter id="sh2" x="-5%" y="-100%" width="110%" height="300%"><feGaussianBlur stdDeviation="0.8"/></filter></defs><rect x="343.5" y="483.5" width="447" height="140.5" fill="#fff" stroke="#aaa" stroke-width="1"/><rect x="344" y="625" width="447" height="2.5" fill="#000" opacity="0.12" filter="url(#sh2)"/><rect x="343" y="623" width="448" height="2" fill="#009900"/><rect x="350.9" y="625" width="1" height="9.5" fill="#ccc"/><rect x="427.8" y="625" width="1" height="9.5" fill="#ccc"/><rect x="504.7" y="625" width="1" height="9.5" fill="#ccc"/><rect x="581.7" y="625" width="1" height="9.5" fill="#ccc"/><rect x="658.6" y="625" width="1" height="9.5" fill="#ccc"/><rect x="735.8" y="625" width="1" height="9.5" fill="#ccc"/><text x="352.2" y="653" text-anchor="middle" font-family="Liberation Sans" font-size="12" fill="#666" textLength="45.5" lengthAdjust="spacingAndGlyphs">10:30:10</text><text x="429.1" y="653" text-anchor="middle" font-family="Liberation Sans" font-size="12" fill="#666" textLength="45.5" lengthAdjust="spacingAndGlyphs">10:30:20</text><text x="506.0" y="653" text-anchor="middle" font-family="Liberation Sans" font-size="12" fill="#666" textLength="45.5" lengthAdjust="spacingAndGlyphs">10:30:30</text><text x="583.0" y="653" text-anchor="middle" font-family="Liberation Sans" font-size="12" fill="#666" textLength="45.5" lengthAdjust="spacingAndGlyphs">10:30:40</text><text x="659.9" y="653" text-anchor="middle" font-family="Liberation Sans" font-size="12" fill="#666" textLength="45.5" lengthAdjust="spacingAndGlyphs">10:30:50</text><text x="737.1" y="653" text-anchor="middle" font-family="Liberation Sans" font-size="12" fill="#666" textLength="45.5" lengthAdjust="spacingAndGlyphs">10:31:00</text><text x="329" y="489" text-anchor="end" font-family="Liberation Sans" font-size="12" fill="#666">1</text><text x="329" y="629" text-anchor="end" font-family="Liberation Sans" font-size="12" fill="#666">0</text><rect x="349.2" y="491" width="12.6" height="12.6" fill="#fff" stroke="#cfcfcf" stroke-width="1.2"/><rect x="350.5" y="492.3" width="10" height="10" fill="#009900"/><text x="366" y="501.5" font-family="Liberation Sans" font-size="12" fill="#555" textLength="95.5" lengthAdjust="spacingAndGlyphs">Sitzungen gesamt</text></svg>
<svg style="left:0;top:0" width="830" height="910" viewBox="0 0 830 910"><rect x="343.5" y="748.5" width="447" height="200" fill="#fff" stroke="#aaa" stroke-width="1"/><text x="329" y="754" text-anchor="end" font-family="Liberation Sans" font-size="12" fill="#666">1</text><rect x="349.2" y="756" width="12.6" height="12.6" fill="#fff" stroke="#cfcfcf" stroke-width="1.2"/><rect x="350.5" y="757.3" width="10" height="10" fill="#009900"/><text x="366" y="766.5" font-family="Liberation Sans" font-size="12" fill="#555" textLength="104" lengthAdjust="spacingAndGlyphs">Gesendete Objekte</text></svg>
<div class="a" style="left:851px;top:210px;width:995px;height:563px;overflow:hidden;background:#fff"><div class="a" style="left:0;top:0;width:995px;height:29px;background:#dadbdd"></div><div class="t" style="left:6.20px;top:8.33px;font-size:13.2px;font-weight:400;color:#666;letter-spacing:0.0px;transform:scaleX(1.0370);transform-origin:0 0;-webkit-text-stroke:0.45px #666">Subsystem</div><svg style="left:136px;top:6px" width="9" height="16" viewBox="0 0 9 16"><path d="M4.5 0.8 L8.8 7 H0.2 Z" fill="#666"/><path d="M4.5 15.2 L8.8 9 H0.2 Z" fill="#bbb"/></svg><div class="a" style="left:150px;top:0;width:1px;height:29px;background:#c9cacc"></div><div class="t" style="left:156.20px;top:8.33px;font-size:13.2px;font-weight:400;color:#666;letter-spacing:0.0px;transform:scaleX(1.0395);transform-origin:0 0;-webkit-text-stroke:0.45px #666">Status</div><svg style="left:236px;top:6px" width="9" height="16" viewBox="0 0 9 16"><path d="M4.5 0.8 L8.8 7 H0.2 Z" fill="#bbb"/><path d="M4.5 15.2 L8.8 9 H0.2 Z" fill="#bbb"/></svg><div class="a" style="left:250px;top:0;width:1px;height:29px;background:#c9cacc"></div><div class="t" style="left:256.20px;top:8.33px;font-size:13.2px;font-weight:400;color:#666;letter-spacing:0.0px;transform:scaleX(1.0297);transform-origin:0 0;-webkit-text-stroke:0.45px #666">Job Benutzer</div><svg style="left:356px;top:6px" width="9" height="16" viewBox="0 0 9 16"><path d="M4.5 0.8 L8.8 7 H0.2 Z" fill="#bbb"/><path d="M4.5 15.2 L8.8 9 H0.2 Z" fill="#bbb"/></svg><div class="a" style="left:370px;top:0;width:1px;height:29px;background:#c9cacc"></div><div class="t" style="left:376.20px;top:8.33px;font-size:13.2px;font-weight:400;color:#666;letter-spacing:0.0px;transform:scaleX(1.0101);transform-origin:0 0;-webkit-text-stroke:0.45px #666">Job Status</div><svg style="left:456px;top:6px" width="9" height="16" viewBox="0 0 9 16"><path d="M4.5 0.8 L8.8 7 H0.2 Z" fill="#bbb"/><path d="M4.5 15.2 L8.8 9 H0.2 Z" fill="#bbb"/></svg><div class="a" style="left:470px;top:0;width:1px;height:29px;background:#c9cacc"></div><div class="t" style="left:476.20px;top:8.33px;font-size:13.2px;font-weight:400;color:#666;letter-spacing:0.0px;transform:scaleX(1.0305);transform-origin:0 0;-webkit-text-stroke:0.45px #666">Job Name</div><svg style="left:676px;top:6px" width="9" height="16" viewBox="0 0 9 16"><path d="M4.5 0.8 L8.8 7 H0.2 Z" fill="#bbb"/><path d="M4.5 15.2 L8.8 9 H0.2 Z" fill="#bbb"/></svg><div class="a" style="left:690px;top:0;width:1px;height:29px;background:#c9cacc"></div><div class="t" style="left:696.20px;top:8.33px;font-size:13.2px;font-weight:400;color:#666;letter-spacing:0.0px;transform:scaleX(0.9850);transform-origin:0 0;-webkit-text-stroke:0.45px #666">Job Typ</div><svg style="left:776px;top:6px" width="9" height="16" viewBox="0 0 9 16"><path d="M4.5 0.8 L8.8 7 H0.2 Z" fill="#bbb"/><path d="M4.5 15.2 L8.8 9 H0.2 Z" fill="#bbb"/></svg><div class="a" style="left:790px;top:0;width:1px;height:29px;background:#c9cacc"></div><div class="t" style="left:796.20px;top:8.33px;font-size:13.2px;font-weight:400;color:#666;letter-spacing:0.0px;transform:scaleX(1.0433);transform-origin:0 0;-webkit-text-stroke:0.45px #666">Typ</div><svg style="left:876px;top:6px" width="9" height="16" viewBox="0 0 9 16"><path d="M4.5 0.8 L8.8 7 H0.2 Z" fill="#bbb"/><path d="M4.5 15.2 L8.8 9 H0.2 Z" fill="#bbb"/></svg><div class="a" style="left:890px;top:0;width:1px;height:29px;background:#c9cacc"></div><div class="t" style="left:896.20px;top:8.33px;font-size:13.2px;font-weight:400;color:#666;letter-spacing:0.0px;transform:scaleX(1.0806);transform-origin:0 0;-webkit-text-stroke:0.45px #666">Funktion</div><svg style="left:976px;top:6px" width="9" height="16" viewBox="0 0 9 16"><path d="M4.5 0.8 L8.8 7 H0.2 Z" fill="#bbb"/><path d="M4.5 15.2 L8.8 9 H0.2 Z" fill="#bbb"/></svg><div class="a" style="left:990px;top:0;width:1px;height:29px;background:#c9cacc"></div><div class="a" style="left:0;top:29px;width:995px;height:37px;background:#fff"></div><div class="t" style="left:9.80px;top:42.12px;font-size:13.8px;font-weight:700;color:#666;letter-spacing:0.0px;transform:scaleX(0.9147);transform-origin:0 0">EFFAS2</div><div class="a" style="left:159px;top:43px;width:10px;height:10px;background:#808080"></div><div class="t" style="left:173.20px;top:41.15px;font-size:14px;font-weight:400;color:#666;letter-spacing:0.0px;transform:scaleX(1.0430);transform-origin:0 0">Inaktiv</div><div class="a" style="left:0;top:66px;width:995px;height:37px;background:#f4f4f4"></div><div class="a" style="left:0;top:66px;width:995px;height:1px;background:#e4e9ee"></div><div class="t" style="left:9.80px;top:79.12px;font-size:13.8px;font-weight:700;color:#666;letter-spacing:0.0px;transform:scaleX(0.9153);transform-origin:0 0">EFFCRYPT</div><div class="a" style="left:159px;top:80px;width:10px;height:10px;background:#808080"></div><div class="t" style="left:173.20px;top:78.15px;font-size:14px;font-weight:400;color:#666;letter-spacing:0.0px;transform:scaleX(1.0430);transform-origin:0 0">Inaktiv</div><div class="a" style="left:0;top:103px;width:995px;height:37px;background:#fff"></div><div class="a" style="left:0;top:103px;width:995px;height:1px;background:#e4e9ee"></div><div class="t" style="left:9.80px;top:116.12px;font-size:13.8px;font-weight:700;color:#666;letter-spacing:0.0px;transform:scaleX(0.9150);transform-origin:0 0">EFFEDI</div><div class="a" style="left:159px;top:117px;width:10px;height:10px;background:#5cb85c"></div><div class="t" style="left:173.20px;top:115.15px;font-size:14px;font-weight:400;color:#666;letter-spacing:0.0px;transform:scaleX(1.0218);transform-origin:0 0">Aktiv</div><div class="t" style="left:259.20px;top:115.15px;font-size:14px;font-weight:400;color:#666;letter-spacing:0.0px;transform:scaleX(0.8572);transform-origin:0 0">QSYS</div><div class="t" style="left:379.20px;top:115.15px;font-size:14px;font-weight:400;color:#666;letter-spacing:0.0px;transform:scaleX(0.9482);transform-origin:0 0">DEQW</div><div class="t" style="left:479.20px;top:115.15px;font-size:14px;font-weight:400;color:#666;letter-spacing:0.0px;transform:scaleX(0.9499);transform-origin:0 0">626625/QSYS/EFFEDI</div><div class="t" style="left:699.20px;top:115.15px;font-size:14px;font-weight:400;color:#666;letter-spacing:0.0px;transform:scaleX(0.8710);transform-origin:0 0">SBS</div><div class="a" style="left:0;top:140px;width:995px;height:37px;background:#fff"></div><div class="a" style="left:0;top:140px;width:995px;height:1px;background:#e4e9ee"></div><div class="a" style="left:159px;top:154px;width:10px;height:10px;background:#5cb85c"></div><div class="t" style="left:173.20px;top:152.15px;font-size:14px;font-weight:400;color:#666;letter-spacing:0.0px;transform:scaleX(1.0218);transform-origin:0 0">Aktiv</div><div class="t" style="left:259.20px;top:152.15px;font-size:14px;font-weight:400;color:#666;letter-spacing:0.0px;transform:scaleX(0.8571);transform-origin:0 0">IEFFECT</div><div class="t" style="left:379.20px;top:152.15px;font-size:14px;font-weight:400;color:#666;letter-spacing:0.0px;transform:scaleX(0.9726);transform-origin:0 0">TIMW</div><div class="t" style="left:479.20px;top:152.15px;font-size:14px;font-weight:400;color:#666;letter-spacing:0.0px;transform:scaleX(0.9622);transform-origin:0 0">628245/IEFFECT/MAPCLT</div><div class="t" style="left:699.20px;top:152.15px;font-size:14px;font-weight:400;color:#666;letter-spacing:0.0px;transform:scaleX(0.9373);transform-origin:0 0">BCH</div><div class="t" style="left:799.20px;top:152.15px;font-size:14px;font-weight:400;color:#666;letter-spacing:0.0px;transform:scaleX(0.9944);transform-origin:0 0">CMD</div><div class="t" style="left:899.20px;top:152.15px;font-size:14px;font-weight:400;color:#666;letter-spacing:0.0px;transform:scaleX(0.9151);transform-origin:0 0">RUNJVA</div><div class="a" style="left:0;top:177px;width:995px;height:37px;background:#fff"></div><div class="a" style="left:0;top:177px;width:995px;height:1px;background:#e4e9ee"></div><div class="a" style="left:159px;top:191px;width:10px;height:10px;background:#5cb85c"></div><div class="t" style="left:173.20px;top:189.15px;font-size:14px;font-weight:400;color:#666;letter-spacing:0.0px;transform:scaleX(1.0218);transform-origin:0 0">Aktiv</div><div class="t" style="left:259.20px;top:189.15px;font-size:14px;font-weight:400;color:#666;letter-spacing:0.0px;transform:scaleX(0.8571);transform-origin:0 0">IEFFECT</div><div class="t" style="left:379.20px;top:189.15px;font-size:14px;font-weight:400;color:#666;letter-spacing:0.0px;transform:scaleX(0.9622);transform-origin:0 0">THDW</div><div class="t" style="left:479.20px;top:189.15px;font-size:14px;font-weight:400;color:#666;letter-spacing:0.0px;transform:scaleX(0.9622);transform-origin:0 0">628247/IEFFECT/MAPCLT</div><div class="t" style="left:699.20px;top:189.15px;font-size:14px;font-weight:400;color:#666;letter-spacing:0.0px;transform:scaleX(0.9255);transform-origin:0 0">BCI</div><div class="t" style="left:799.20px;top:189.15px;font-size:14px;font-weight:400;color:#666;letter-spacing:0.0px;transform:scaleX(0.9036);transform-origin:0 0">JVM</div><div class="t" style="left:899.20px;top:189.15px;font-size:14px;font-weight:400;color:#666;letter-spacing:0.0px;transform:scaleX(1.0762);transform-origin:0 0">com.menten</div><div class="a" style="left:0;top:214px;width:995px;height:37px;background:#f4f4f4"></div><div class="a" style="left:0;top:214px;width:995px;height:1px;background:#e4e9ee"></div><div class="t" style="left:9.80px;top:227.12px;font-size:13.8px;font-weight:700;color:#666;letter-spacing:0.0px;transform:scaleX(0.9377);transform-origin:0 0">EFFEMAIL</div><div class="a" style="left:159px;top:228px;width:10px;height:10px;background:#808080"></div><div class="t" style="left:173.20px;top:226.15px;font-size:14px;font-weight:400;color:#666;letter-spacing:0.0px;transform:scaleX(1.0430);transform-origin:0 0">Inaktiv</div><div class="a" style="left:0;top:251px;width:995px;height:37px;background:#fff"></div><div class="a" style="left:0;top:251px;width:995px;height:1px;background:#e4e9ee"></div><div class="t" style="left:9.80px;top:264.12px;font-size:13.8px;font-weight:700;color:#666;letter-spacing:0.0px;transform:scaleX(0.8845);transform-origin:0 0">EFFFTP</div><div class="a" style="left:159px;top:265px;width:10px;height:10px;background:#5cb85c"></div><div class="t" style="left:173.20px;top:263.15px;font-size:14px;font-weight:400;color:#666;letter-spacing:0.0px;transform:scaleX(1.0218);transform-origin:0 0">Aktiv</div><div class="t" style="left:259.20px;top:263.15px;font-size:14px;font-weight:400;color:#666;letter-spacing:0.0px;transform:scaleX(0.8572);transform-origin:0 0">QSYS</div><div class="t" style="left:379.20px;top:263.15px;font-size:14px;font-weight:400;color:#666;letter-spacing:0.0px;transform:scaleX(0.9482);transform-origin:0 0">DEQW</div><div class="t" style="left:479.20px;top:263.15px;font-size:14px;font-weight:400;color:#666;letter-spacing:0.0px;transform:scaleX(0.9386);transform-origin:0 0">628679/QSYS/EFFFTP</div><div class="t" style="left:699.20px;top:263.15px;font-size:14px;font-weight:400;color:#666;letter-spacing:0.0px;transform:scaleX(0.8710);transform-origin:0 0">SBS</div><div class="a" style="left:0;top:288px;width:995px;height:37px;background:#fff"></div><div class="a" style="left:0;top:288px;width:995px;height:1px;background:#e4e9ee"></div><div class="a" style="left:159px;top:302px;width:10px;height:10px;background:#5cb85c"></div><div class="t" style="left:173.20px;top:300.15px;font-size:14px;font-weight:400;color:#666;letter-spacing:0.0px;transform:scaleX(1.0218);transform-origin:0 0">Aktiv</div><div class="t" style="left:259.20px;top:300.15px;font-size:14px;font-weight:400;color:#666;letter-spacing:0.0px;transform:scaleX(0.8571);transform-origin:0 0">IEFFECT</div><div class="t" style="left:379.20px;top:300.15px;font-size:14px;font-weight:400;color:#666;letter-spacing:0.0px;transform:scaleX(0.9726);transform-origin:0 0">TIMW</div><div class="t" style="left:479.20px;top:300.15px;font-size:14px;font-weight:400;color:#666;letter-spacing:0.0px;transform:scaleX(0.9323);transform-origin:0 0">628799/IEFFECT/SFTSRV7</div><div class="t" style="left:699.20px;top:300.15px;font-size:14px;font-weight:400;color:#666;letter-spacing:0.0px;transform:scaleX(0.9373);transform-origin:0 0">BCH</div><div class="t" style="left:799.20px;top:300.15px;font-size:14px;font-weight:400;color:#666;letter-spacing:0.0px;transform:scaleX(0.9944);transform-origin:0 0">CMD</div><div class="t" style="left:899.20px;top:300.15px;font-size:14px;font-weight:400;color:#666;letter-spacing:0.0px;transform:scaleX(0.9151);transform-origin:0 0">RUNJVA</div><div class="a" style="left:0;top:325px;width:995px;height:37px;background:#fff"></div><div class="a" style="left:0;top:325px;width:995px;height:1px;background:#e4e9ee"></div><div class="a" style="left:159px;top:339px;width:10px;height:10px;background:#5cb85c"></div><div class="t" style="left:173.20px;top:337.15px;font-size:14px;font-weight:400;color:#666;letter-spacing:0.0px;transform:scaleX(1.0218);transform-origin:0 0">Aktiv</div><div class="t" style="left:259.20px;top:337.15px;font-size:14px;font-weight:400;color:#666;letter-spacing:0.0px;transform:scaleX(0.8571);transform-origin:0 0">IEFFECT</div><div class="t" style="left:379.20px;top:337.15px;font-size:14px;font-weight:400;color:#666;letter-spacing:0.0px;transform:scaleX(0.9622);transform-origin:0 0">THDW</div><div class="t" style="left:479.20px;top:337.15px;font-size:14px;font-weight:400;color:#666;letter-spacing:0.0px;transform:scaleX(0.9323);transform-origin:0 0">628800/IEFFECT/SFTSRV7</div><div class="t" style="left:699.20px;top:337.15px;font-size:14px;font-weight:400;color:#666;letter-spacing:0.0px;transform:scaleX(0.9255);transform-origin:0 0">BCI</div><div class="t" style="left:799.20px;top:337.15px;font-size:14px;font-weight:400;color:#666;letter-spacing:0.0px;transform:scaleX(0.9036);transform-origin:0 0">JVM</div><div class="t" style="left:899.20px;top:337.15px;font-size:14px;font-weight:400;color:#666;letter-spacing:0.0px;transform:scaleX(1.0762);transform-origin:0 0">com.menten</div><div class="a" style="left:0;top:362px;width:995px;height:37px;background:#f4f4f4"></div><div class="a" style="left:0;top:362px;width:995px;height:1px;background:#e4e9ee"></div><div class="t" style="left:9.80px;top:375.12px;font-size:13.8px;font-weight:700;color:#666;letter-spacing:0.0px;transform:scaleX(0.9291);transform-origin:0 0">EFFHTTP</div><div class="a" style="left:159px;top:376px;width:10px;height:10px;background:#808080"></div><div class="t" style="left:173.20px;top:374.15px;font-size:14px;font-weight:400;color:#666;letter-spacing:0.0px;transform:scaleX(1.0430);transform-origin:0 0">Inaktiv</div><div class="a" style="left:0;top:399px;width:995px;height:37px;background:#fff"></div><div class="a" style="left:0;top:399px;width:995px;height:1px;background:#e4e9ee"></div><div class="t" style="left:9.80px;top:412.12px;font-size:13.8px;font-weight:700;color:#666;letter-spacing:0.0px;transform:scaleX(0.8883);transform-origin:0 0">EFFOCSP</div><div class="a" style="left:159px;top:413px;width:10px;height:10px;background:#808080"></div><div class="t" style="left:173.20px;top:411.15px;font-size:14px;font-weight:400;color:#666;letter-spacing:0.0px;transform:scaleX(1.0430);transform-origin:0 0">Inaktiv</div><div class="a" style="left:0;top:436px;width:995px;height:37px;background:#f4f4f4"></div><div class="a" style="left:0;top:436px;width:995px;height:1px;background:#e4e9ee"></div><div class="t" style="left:9.80px;top:449.12px;font-size:13.8px;font-weight:700;color:#666;letter-spacing:0.0px;transform:scaleX(0.9400);transform-origin:0 0">EFFOFTP2</div><div class="a" style="left:159px;top:450px;width:10px;height:10px;background:#808080"></div><div class="t" style="left:173.20px;top:448.15px;font-size:14px;font-weight:400;color:#666;letter-spacing:0.0px;transform:scaleX(1.0430);transform-origin:0 0">Inaktiv</div><div class="a" style="left:0;top:473px;width:995px;height:37px;background:#fff"></div><div class="a" style="left:0;top:473px;width:995px;height:1px;background:#e4e9ee"></div><div class="t" style="left:9.80px;top:486.12px;font-size:13.8px;font-weight:700;color:#666;letter-spacing:0.0px;transform:scaleX(0.9142);transform-origin:0 0">EFFREPORT</div><div class="a" style="left:159px;top:487px;width:10px;height:10px;background:#808080"></div><div class="t" style="left:173.20px;top:485.15px;font-size:14px;font-weight:400;color:#666;letter-spacing:0.0px;transform:scaleX(1.0430);transform-origin:0 0">Inaktiv</div><div class="a" style="left:0;top:510px;width:995px;height:37px;background:#f4f4f4"></div><div class="a" style="left:0;top:510px;width:995px;height:1px;background:#e4e9ee"></div><div class="t" style="left:9.80px;top:523.12px;font-size:13.8px;font-weight:700;color:#666;letter-spacing:0.0px;transform:scaleX(0.8914);transform-origin:0 0">EFFSERVER</div><div class="a" style="left:159px;top:524px;width:10px;height:10px;background:#808080"></div><div class="t" style="left:173.20px;top:522.15px;font-size:14px;font-weight:400;color:#666;letter-spacing:0.0px;transform:scaleX(1.0430);transform-origin:0 0">Inaktiv</div><div class="a" style="left:0;top:547px;width:995px;height:37px;background:#fff"></div><div class="a" style="left:0;top:547px;width:995px;height:1px;background:#e4e9ee"></div><div class="t" style="left:9.80px;top:560.12px;font-size:13.8px;font-weight:700;color:#666;letter-spacing:0.0px;transform:scaleX(0.9028);transform-origin:0 0">EFFSERVICE</div><div class="a" style="left:159px;top:561px;width:10px;height:10px;background:#5cb85c"></div><div class="t" style="left:173.20px;top:559.15px;font-size:14px;font-weight:400;color:#666;letter-spacing:0.0px;transform:scaleX(1.0218);transform-origin:0 0">Aktiv</div><div class="t" style="left:259.20px;top:559.15px;font-size:14px;font-weight:400;color:#666;letter-spacing:0.0px;transform:scaleX(0.8572);transform-origin:0 0">QSYS</div><div class="t" style="left:379.20px;top:559.15px;font-size:14px;font-weight:400;color:#666;letter-spacing:0.0px;transform:scaleX(0.9482);transform-origin:0 0">DEQW</div><div class="t" style="left:479.20px;top:559.15px;font-size:14px;font-weight:400;color:#666;letter-spacing:0.0px;transform:scaleX(0.9147);transform-origin:0 0">626926/QSYS/EFFSERVICE</div><div class="t" style="left:699.20px;top:559.15px;font-size:14px;font-weight:400;color:#666;letter-spacing:0.0px;transform:scaleX(0.8710);transform-origin:0 0">SBS</div><div class="a" style="left:150px;top:29px;width:1px;height:540px;background:#e4e9ee"></div><div class="a" style="left:250px;top:29px;width:1px;height:540px;background:#e4e9ee"></div><div class="a" style="left:370px;top:29px;width:1px;height:540px;background:#e4e9ee"></div><div class="a" style="left:470px;top:29px;width:1px;height:540px;background:#e4e9ee"></div><div class="a" style="left:690px;top:29px;width:1px;height:540px;background:#e4e9ee"></div><div class="a" style="left:790px;top:29px;width:1px;height:540px;background:#e4e9ee"></div><div class="a" style="left:890px;top:29px;width:1px;height:540px;background:#e4e9ee"></div><div class="a" style="left:990px;top:29px;width:1px;height:540px;background:#e4e9ee"></div><div class="a" style="left:0;top:29px;width:1px;height:540px;background:#e4e9ee"></div><div class="a" style="left:0;top:252px;width:985px;height:103px;border:3px solid #e53e3a"></div><div class="a" style="left:0;top:564px;width:995px;height:16px;background:#efefef"></div></div>
<div class="a" style="left:851px;top:774px;width:995px;height:16px;background:#efefef"></div>
<div class="a" style="left:869px;top:774px;width:502px;height:15px;background:#cdcdcd"></div>
<svg style="left:851px;top:774px" width="17" height="16" viewBox="0 0 17 16"><path d="M10 4 L6.2 8 L10 12" fill="none" stroke="#505050" stroke-width="2"/></svg>
<svg style="left:1829px;top:774px" width="17" height="16" viewBox="0 0 17 16"><path d="M6.5 4 L10.3 8 L6.5 12" fill="none" stroke="#505050" stroke-width="2"/></svg>
<div class="a" style="left:1847px;top:210px;width:16px;height:580px;background:#efefef"></div>
<div class="a" style="left:1847px;top:227px;width:15px;height:238px;background:#cdcdcd"></div>
<svg style="left:1847px;top:210px" width="16" height="17" viewBox="0 0 16 17"><path d="M4.2 10.5 L8 6.5 L11.8 10.5" fill="none" stroke="#505050" stroke-width="2"/></svg>
<svg style="left:1847px;top:756px" width="16" height="17" viewBox="0 0 16 17"><path d="M4.2 6.5 L8 10.5 L11.8 6.5" fill="none" stroke="#505050" stroke-width="2"/></svg>
<div class="a" style="left:0;top:872px;width:1903px;height:5px;background:#f39c00"></div>
<div class="a" style="left:0;top:877px;width:1903px;height:33px;background:#3c3c3b"></div>
<div class="t" style="left:20px;top:886px;font-size:14px;color:#fff;letter-spacing:-0.1px">i-effect<sup style="font-size:11px;vertical-align:0;position:relative;top:-5px">®</sup> WebControl</div>
<div class="t" style="right:37px;top:886px;font-size:13.6px;color:#fff;letter-spacing:-0.2px">i-effect: V2R8M0 &nbsp;::&nbsp; System: devp2:443 &nbsp;::&nbsp; Seriennummer: 785257X &nbsp;::&nbsp; Partition: 10 (DEVP2)</div>
</body></html>
